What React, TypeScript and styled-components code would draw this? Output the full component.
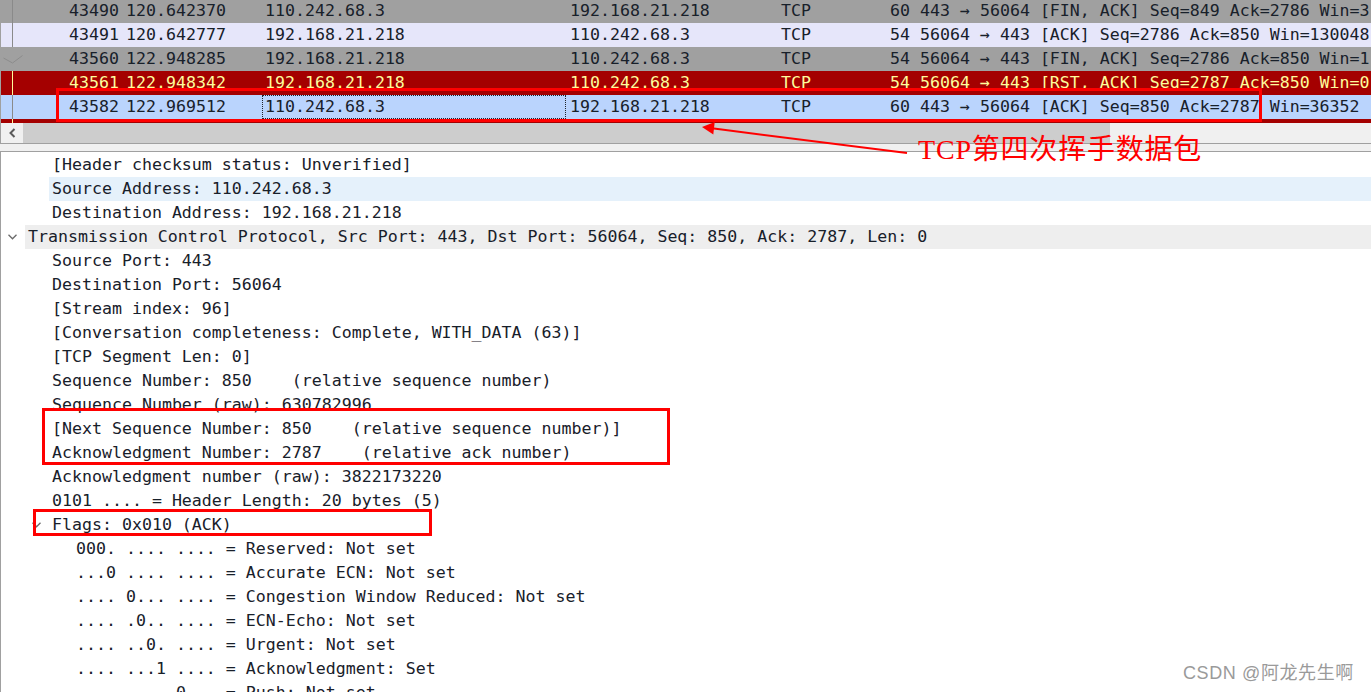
import React from 'react';
import styled, { createGlobalStyle } from 'styled-components';

const GlobalStyle = createGlobalStyle`
  html, body { margin: 0; padding: 0; background: #ffffff; }
  body { width: 1371px; height: 692px; overflow: hidden; }
`;

const MONO = `"DejaVu Sans Mono", "Liberation Mono", monospace`;
const TEXT = '#18202a';

const Screen = styled.div`
  position: relative;
  width: 1371px;
  height: 692px;
  overflow: hidden;
  display: flex;
  flex-direction: column;
  background: #ffffff;
  font-family: ${MONO};
  font-size: 16.6px;
  color: ${TEXT};
`;

/* ---------- packet list ---------- */
const PacketPane = styled.div`
  display: flex;
  flex-direction: column;
  border-left: 1px solid #a0a0a0;
  border-bottom: 1px solid #a0a0a0;
  flex: none;
`;

const RowsViewport = styled.div`
  height: 123px;
  overflow: hidden;
`;

const RowsInner = styled.div`
  margin-top: -1px;
  display: flex;
  flex-direction: column;
`;

type Scheme = 'gray' | 'lav' | 'red' | 'sel';
const bgOf: Record<Scheme, string> = {
  gray: '#a0a0a0',
  lav: '#e6e6fa',
  red: '#a40000',
  sel: '#bad4fd',
};
const fgOf: Record<Scheme, string> = {
  gray: TEXT,
  lav: TEXT,
  red: '#fffc9c',
  sel: TEXT,
};
const lineOf: Record<Scheme, string> = {
  gray: '#8a8a8a',
  lav: '#8a8a8a',
  red: '#fffc9c',
  sel: '#8a8a8a',
};

const PacketRow = styled.div<{ $scheme: Scheme }>`
  display: grid;
  grid-template-columns: 12px 109px 140px 304px 212px 92px 43px minmax(0, 1fr);
  height: 24px;
  line-height: 24px;
  background: ${(p) => bgOf[p.$scheme]};
  color: ${(p) => fgOf[p.$scheme]};
  white-space: pre;
`;

const Marker = styled.div<{ $scheme: Scheme; $kind: 'line' | 'check' | 'none' }>`
  position: relative;
  box-sizing: border-box;
  border-right: 1px solid
    ${(p) => (p.$kind === 'line' ? lineOf[p.$scheme] : 'transparent')};
`;

const CheckGlyph = styled.svg`
  position: absolute;
  left: 2px;
  top: 8px;
  overflow: visible;
`;

const Cell = styled.div<{ $align?: 'left' | 'right'; $pl?: number; $pr?: number; $focus?: boolean }>`
  box-sizing: border-box;
  overflow: hidden;
  text-align: ${(p) => p.$align ?? 'left'};
  padding-left: ${(p) => p.$pl ?? 0}px;
  padding-right: ${(p) => p.$pr ?? 0}px;
  border: 1px dotted ${(p) => (p.$focus ? '#20242a' : 'transparent')};
  line-height: 22px;
`;

const HScroll = styled.div`
  display: flex;
  height: 20px;
  background: #f0f0f0;
`;

const ScrollButton = styled.div`
  width: 22px;
  flex: none;
  display: flex;
  align-items: center;
  justify-content: center;
  background: #f0f0f0;
`;

const ScrollThumb = styled.div`
  width: 1087px;
  flex: none;
  background: #cdcdcd;
`;

const ScrollTrack = styled.div`
  flex: 1;
  background: #f0f0f0;
`;

const Splitter = styled.div`
  height: 7px;
  flex: none;
  background: #f0f0f0;
`;

/* ---------- detail tree ---------- */
const DetailPane = styled.div`
  flex: 1;
  border-left: 1px solid #a0a0a0;
  border-top: 1px solid #a0a0a0;
  padding-top: 1px;
  overflow: hidden;
  display: flex;
  flex-direction: column;
`;

type Hl = 'none' | 'sel' | 'tree';
const DetailRow = styled.div<{ $level: number }>`
  display: flex;
  height: 24px;
  flex: none;
  padding-left: ${(p) => p.$level * 24}px;
`;

const Expander = styled.div`
  width: 24px;
  flex: none;
  display: flex;
  align-items: center;
  padding-left: 7px;
  box-sizing: border-box;
`;

const Label = styled.div<{ $hl: Hl }>`
  flex: 1;
  padding-left: 3px;
  line-height: 24px;
  white-space: pre;
  overflow: hidden;
  background: ${(p) => (p.$hl === 'sel' ? '#e5f1fb' : p.$hl === 'tree' ? '#eeeeee' : 'transparent')};
`;

/* ---------- annotation overlays ---------- */
const RedBox = styled.div<{ $x: number; $y: number; $w: number; $h: number }>`
  position: absolute;
  left: ${(p) => p.$x}px;
  top: ${(p) => p.$y}px;
  width: ${(p) => p.$w}px;
  height: ${(p) => p.$h}px;
  box-sizing: border-box;
  border: 3px solid #ff0000;
  pointer-events: none;
`;

const ArrowSvg = styled.svg`
  position: absolute;
  left: 0;
  top: 0;
  pointer-events: none;
`;

const Callout = styled.div`
  position: absolute;
  left: 918px;
  top: 136px;
  font-family: "Liberation Serif", "Noto Sans CJK SC", serif;
  font-size: 28px;
  line-height: 28px;
  letter-spacing: 0.8px;
  color: #ff0000;
  white-space: nowrap;
`;

const Watermark = styled.div`
  position: absolute;
  left: 1183px;
  top: 661px;
  font-family: "Liberation Sans", "Noto Sans CJK SC", sans-serif;
  font-size: 18px;
  line-height: 24px;
  letter-spacing: 0.6px;
  color: #9a9a9a;
  white-space: nowrap;
`;

/* ---------- data ---------- */
type Packet = {
  scheme: Scheme;
  marker: 'line' | 'check' | 'none';
  no: string;
  time: string;
  src: string;
  dst: string;
  proto: string;
  len: string;
  info: string;
  focus?: boolean;
};

const packets: Packet[] = [
  { scheme: 'gray', marker: 'line', no: '43490', time: '120.642370', src: '110.242.68.3', dst: '192.168.21.218', proto: 'TCP', len: '60', info: '443 → 56064 [FIN, ACK] Seq=849 Ack=2786 Win=36352 Len=0' },
  { scheme: 'lav', marker: 'line', no: '43491', time: '120.642777', src: '192.168.21.218', dst: '110.242.68.3', proto: 'TCP', len: '54', info: '56064 → 443 [ACK] Seq=2786 Ack=850 Win=130048 Len=0' },
  { scheme: 'gray', marker: 'check', no: '43560', time: '122.948285', src: '192.168.21.218', dst: '110.242.68.3', proto: 'TCP', len: '54', info: '56064 → 443 [FIN, ACK] Seq=2786 Ack=850 Win=130048 Len=0' },
  { scheme: 'red', marker: 'line', no: '43561', time: '122.948342', src: '192.168.21.218', dst: '110.242.68.3', proto: 'TCP', len: '54', info: '56064 → 443 [RST, ACK] Seq=2787 Ack=850 Win=0 Len=0' },
  { scheme: 'sel', marker: 'line', no: '43582', time: '122.969512', src: '110.242.68.3', dst: '192.168.21.218', proto: 'TCP', len: '60', info: '443 → 56064 [ACK] Seq=850 Ack=2787 Win=36352 Len=0', focus: true },
  { scheme: 'red', marker: 'line', no: '', time: '', src: '', dst: '', proto: '', len: '', info: '' },
];

type Detail = { level: number; text: string; expanded?: boolean; hl?: Hl };

const details: Detail[] = [
  { level: 1, text: '[Header checksum status: Unverified]' },
  { level: 1, text: 'Source Address: 110.242.68.3', hl: 'sel' },
  { level: 1, text: 'Destination Address: 192.168.21.218' },
  { level: 0, text: 'Transmission Control Protocol, Src Port: 443, Dst Port: 56064, Seq: 850, Ack: 2787, Len: 0', expanded: true, hl: 'tree' },
  { level: 1, text: 'Source Port: 443' },
  { level: 1, text: 'Destination Port: 56064' },
  { level: 1, text: '[Stream index: 96]' },
  { level: 1, text: '[Conversation completeness: Complete, WITH_DATA (63)]' },
  { level: 1, text: '[TCP Segment Len: 0]' },
  { level: 1, text: 'Sequence Number: 850    (relative sequence number)' },
  { level: 1, text: 'Sequence Number (raw): 630782996' },
  { level: 1, text: '[Next Sequence Number: 850    (relative sequence number)]' },
  { level: 1, text: 'Acknowledgment Number: 2787    (relative ack number)' },
  { level: 1, text: 'Acknowledgment number (raw): 3822173220' },
  { level: 1, text: '0101 .... = Header Length: 20 bytes (5)' },
  { level: 1, text: 'Flags: 0x010 (ACK)', expanded: true },
  { level: 2, text: '000. .... .... = Reserved: Not set' },
  { level: 2, text: '...0 .... .... = Accurate ECN: Not set' },
  { level: 2, text: '.... 0... .... = Congestion Window Reduced: Not set' },
  { level: 2, text: '.... .0.. .... = ECN-Echo: Not set' },
  { level: 2, text: '.... ..0. .... = Urgent: Not set' },
  { level: 2, text: '.... ...1 .... = Acknowledgment: Set' },
  { level: 2, text: '.... .... 0... = Push: Not set' },
];

const Chevron = () => (
  <svg width="9" height="6" viewBox="0 0 9 6">
    <polyline points="0.5,0.8 4.5,4.8 8.5,0.8" fill="none" stroke="#6a6a6a" strokeWidth="1.3" />
  </svg>
);

export default function App() {
  return (
    <>
      <GlobalStyle />
      <Screen>
        <PacketPane>
          <RowsViewport>
            <RowsInner>
              {packets.map((p, i) => (
                <PacketRow key={i} $scheme={p.scheme}>
                  <Marker $scheme={p.scheme} $kind={p.marker}>
                    {p.marker === 'check' && (
                      <CheckGlyph width="20" height="9" viewBox="0 0 20 9">
                        <polyline points="0.5,3 9.5,8 19.5,0.5" fill="none" stroke="#8c8c8c" strokeWidth="1" />
                      </CheckGlyph>
                    )}
                  </Marker>
                  <Cell $align="right" $pr={2}>{p.no}</Cell>
                  <Cell $pl={3}>{p.time}</Cell>
                  <Cell $pl={2} $focus={p.focus}>{p.src}</Cell>
                  <Cell $pl={3}>{p.dst}</Cell>
                  <Cell $pl={2}>{p.proto}</Cell>
                  <Cell $align="right" $pr={2}>{p.len}</Cell>
                  <Cell $pl={6}>{p.info}</Cell>
                </PacketRow>
              ))}
            </RowsInner>
          </RowsViewport>
          <HScroll>
            <ScrollButton>
              <svg width="7" height="10" viewBox="0 0 7 10">
                <polyline points="5.5,1 1.5,5 5.5,9" fill="none" stroke="#5a5a5a" strokeWidth="2" />
              </svg>
            </ScrollButton>
            <ScrollThumb />
            <ScrollTrack />
          </HScroll>
        </PacketPane>
        <Splitter />
        <DetailPane>
          {details.map((d, i) => (
            <DetailRow key={i} $level={d.level}>
              <Expander>{d.expanded && <Chevron />}</Expander>
              <Label $hl={d.hl ?? 'none'}>{d.text}</Label>
            </DetailRow>
          ))}
        </DetailPane>

        <RedBox $x={56} $y={88} $w={1206} $h={34} />
        <RedBox $x={42} $y={408} $w={628} $h={57} />
        <RedBox $x={33} $y={509} $w={399} $h={27} />
        <ArrowSvg width="1371" height="692" viewBox="0 0 1371 692">
          <line x1="712" y1="128.3" x2="907" y2="153" stroke="#ff0000" strokeWidth="2" />
          <polygon points="702,127 714.7,122 713.3,134.5" fill="#ff0000" />
        </ArrowSvg>
        <Callout>TCP第四次挥手数据包</Callout>
        <Watermark>CSDN @阿龙先生啊</Watermark>
      </Screen>
    </>
  );
}
